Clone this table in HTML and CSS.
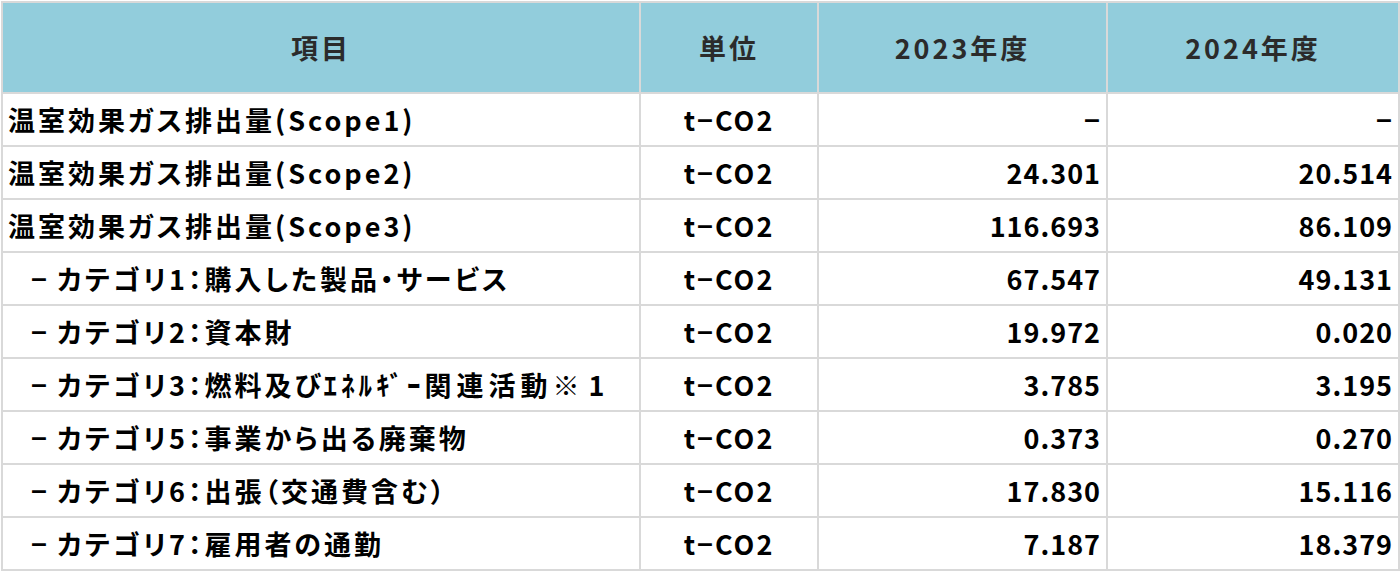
FILE: index.html
```html
<!DOCTYPE html>
<html lang="ja">
<head>
<meta charset="utf-8">
<title>温室効果ガス排出量</title>
<link rel="stylesheet" href="styles.css">
</head>
<body>
<table class="ghg">
  <colgroup>
    <col class="c-item">
    <col class="c-unit">
    <col class="c-year">
    <col class="c-year2">
  </colgroup>
  <thead>
    <tr>
      <th>項目</th>
      <th>単位</th>
      <th>2023年度</th>
      <th>2024年度</th>
    </tr>
  </thead>
  <tbody>
    <tr><td class="item">温室効果ガス排出量(Scope1)</td><td class="unit">t−CO2</td><td class="num">−</td><td class="num">−</td></tr>
    <tr><td class="item">温室効果ガス排出量(Scope2)</td><td class="unit">t−CO2</td><td class="num">24.301</td><td class="num">20.514</td></tr>
    <tr><td class="item">温室効果ガス排出量(Scope3)</td><td class="unit">t−CO2</td><td class="num">116.693</td><td class="num">86.109</td></tr>
    <tr><td class="item sub"><span class="dash">−</span>カテゴリ1：購入した製品・サービス</td><td class="unit">t−CO2</td><td class="num">67.547</td><td class="num">49.131</td></tr>
    <tr><td class="item sub"><span class="dash">−</span>カテゴリ2：資本財</td><td class="unit">t−CO2</td><td class="num">19.972</td><td class="num">0.020</td></tr>
    <tr><td class="item sub"><span class="dash">−</span>カテゴリ3：燃料及び<span class="hw">ｴﾈﾙｷﾞｰ</span><span class="wide">関連活動</span><span class="note">※1</span></td><td class="unit">t−CO2</td><td class="num">3.785</td><td class="num">3.195</td></tr>
    <tr><td class="item sub"><span class="dash">−</span>カテゴリ5：事業から出る廃棄物</td><td class="unit">t−CO2</td><td class="num">0.373</td><td class="num">0.270</td></tr>
    <tr><td class="item sub"><span class="dash">−</span>カテゴリ6：出張（交通費含む）</td><td class="unit">t−CO2</td><td class="num">17.830</td><td class="num">15.116</td></tr>
    <tr><td class="item sub"><span class="dash">−</span>カテゴリ7：雇用者の通勤</td><td class="unit">t−CO2</td><td class="num">7.187</td><td class="num">18.379</td></tr>
  </tbody>
</table>
</body>
</html>
```
FILE: styles.css
```css
html, body {
  margin: 0;
  padding: 0;
  background: #ffffff;
}

body {
  padding: 1px;
  font-family: "Noto Sans CJK JP", "Noto Sans", sans-serif;
}

.ghg {
  border-collapse: collapse;
  table-layout: fixed;
  width: 1397px;
  font-size: 27px;
  font-weight: 700;
  color: #000;
  font-feature-settings: "palt";
}

.c-item { width: 638px; }
.c-unit { width: 178px; }
.c-year { width: 289px; }
.c-year2 { width: 292px; }

.ghg th,
.ghg td {
  border: 2px solid #d9d9d9;
  padding: 0 5px;
  line-height: 1;
  white-space: nowrap;
  overflow: hidden;
}

.ghg th {
  height: 89px;
  background: #92cddc;
  color: #2b2b2b;
  text-align: center;
  font-weight: 700;
  letter-spacing: 3px;
}

.ghg td {
  height: 51px;
}

.item {
  text-align: left;
  padding-left: 8px;
  letter-spacing: 3px;
}

.item.sub {
  padding-left: 28px;
}

.dash {
  display: inline-block;
  width: 26px;
  letter-spacing: 0;
}

.hw {
  font-feature-settings: normal;
  letter-spacing: 4px;
}

.wide {
  letter-spacing: 5px;
}

.note {
  font-feature-settings: normal;
  letter-spacing: 9px;
}

.unit {
  text-align: center;
  letter-spacing: 2px;
}

.num {
  text-align: right;
  letter-spacing: 1px;
}
```
